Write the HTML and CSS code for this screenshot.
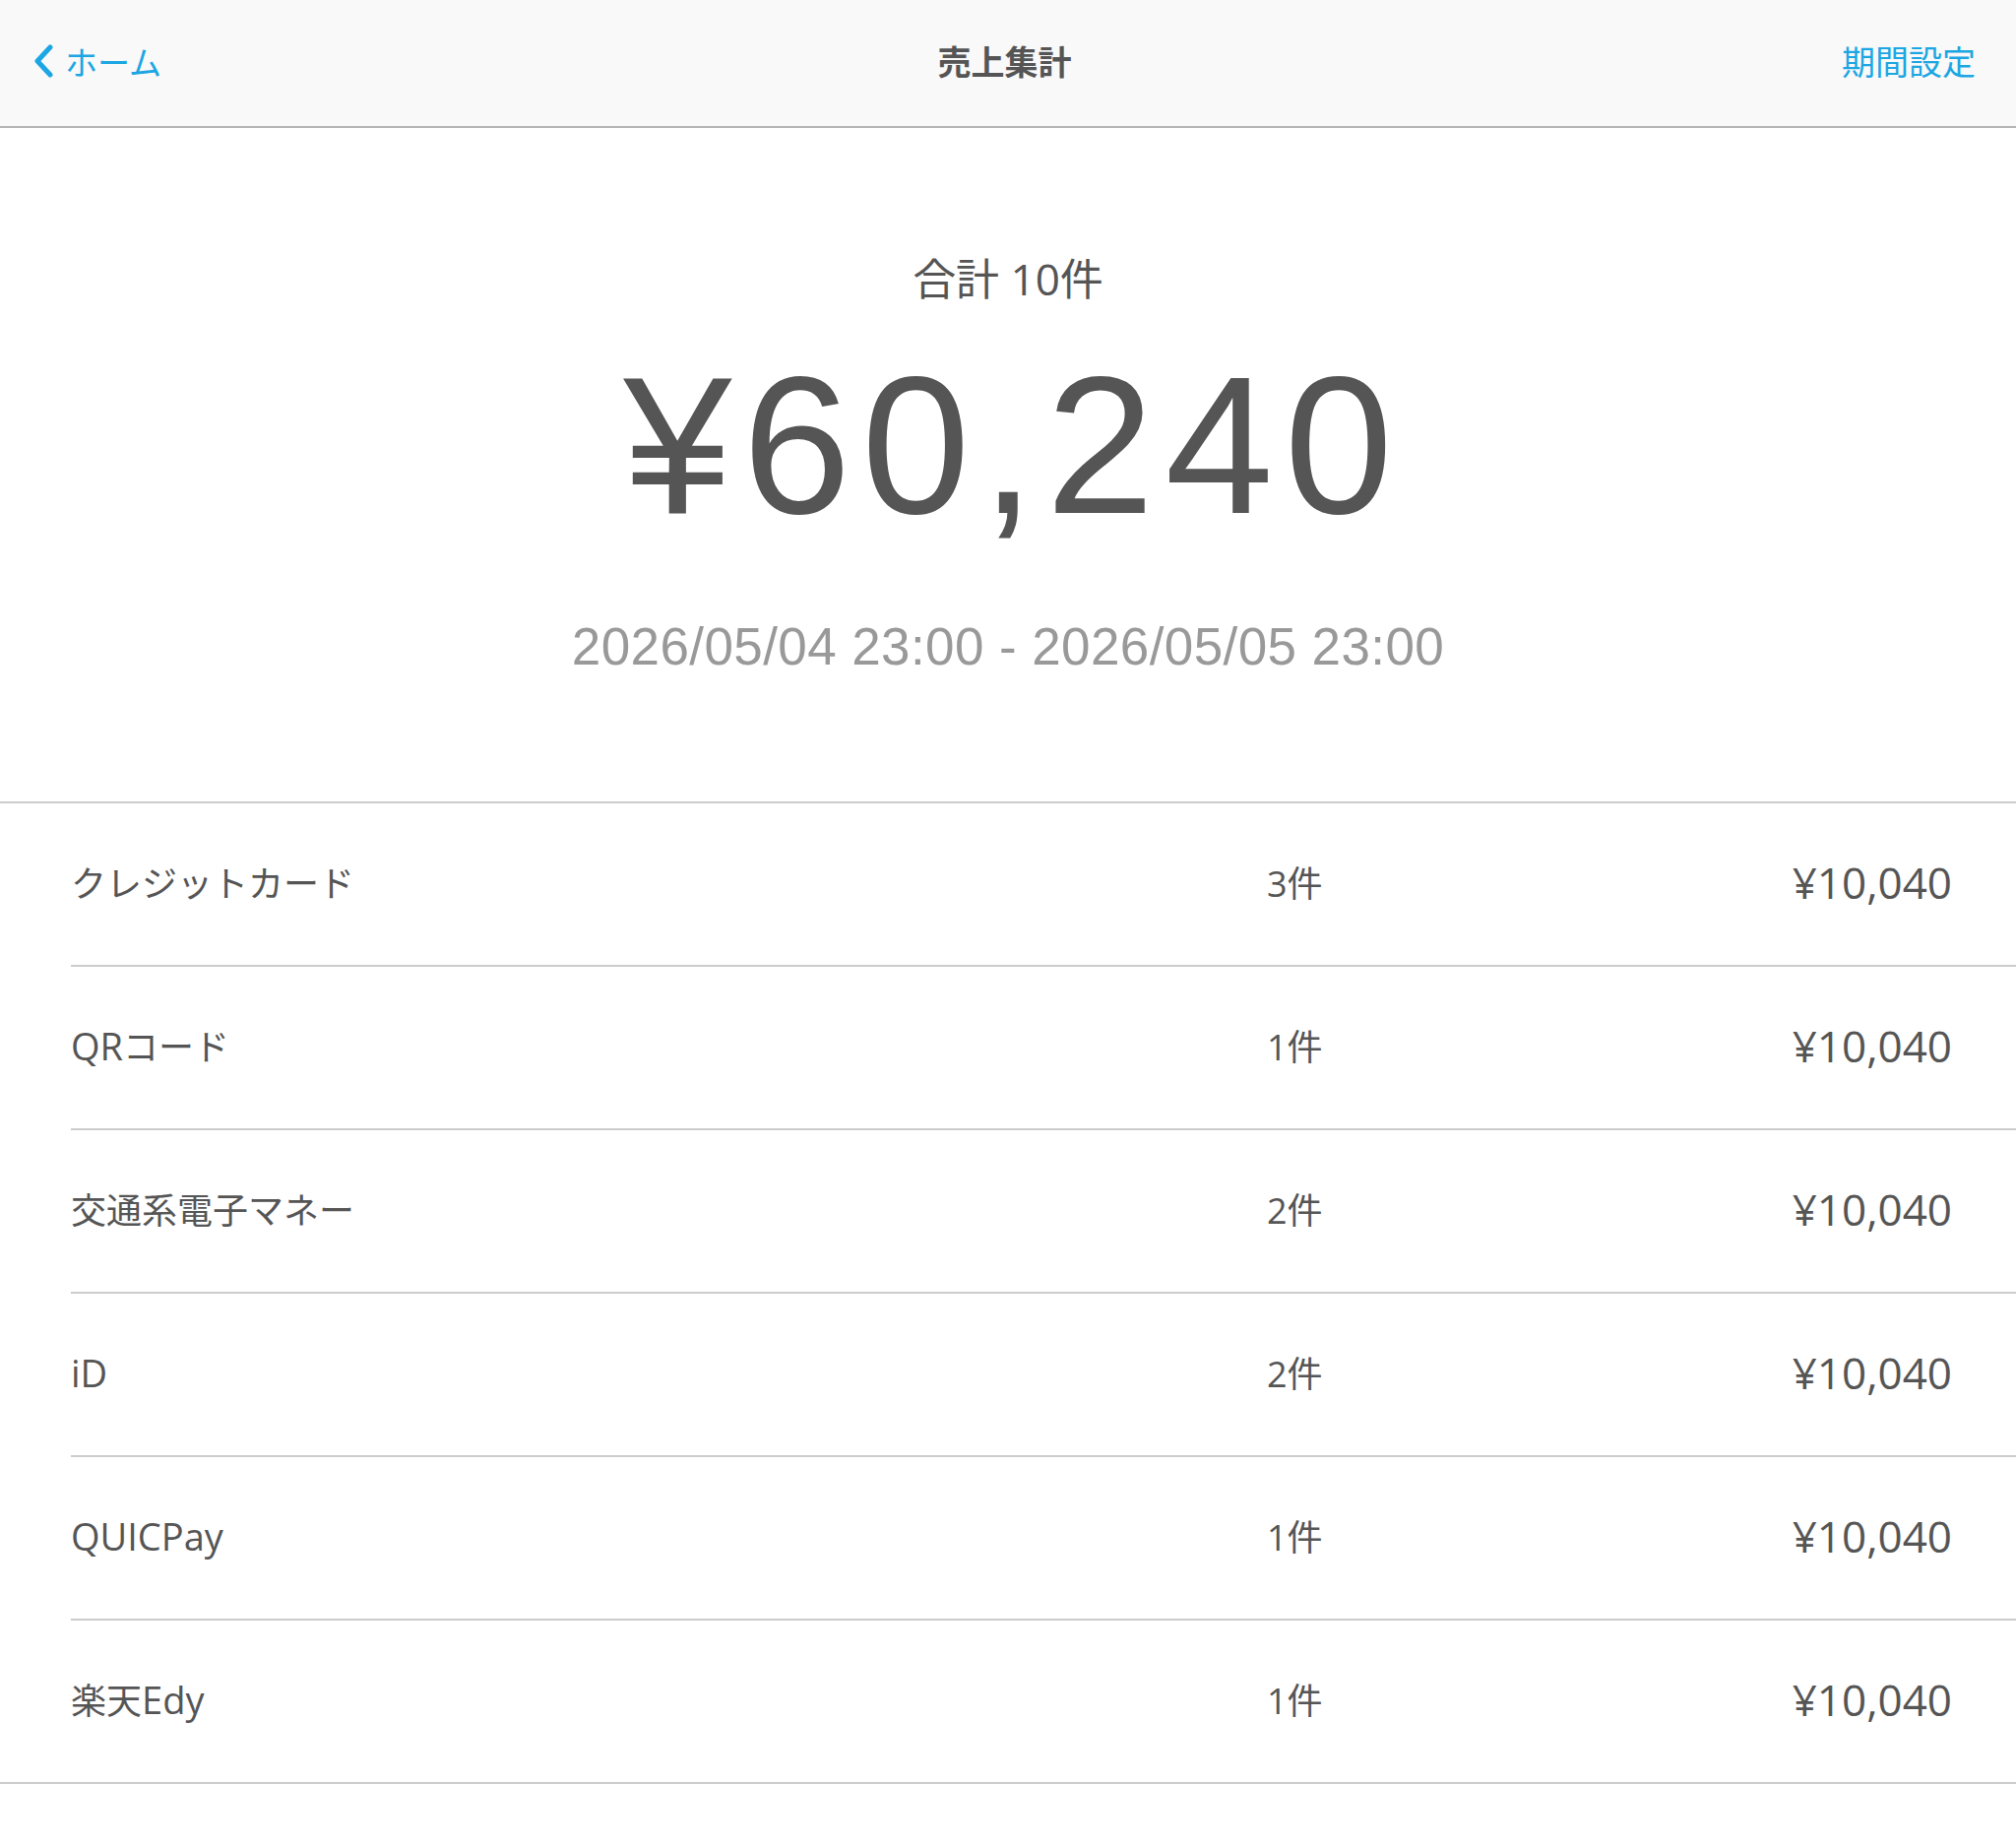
FILE: index.html
```html
<!DOCTYPE html>
<html lang="ja">
<head>
<meta charset="utf-8">
<title>売上集計</title>
<link rel="stylesheet" href="styles.css">
</head>
<body>
<header class="nav">
  <a class="nav-back" href="#">
    <svg class="chevron" width="22" height="34" viewBox="0 0 22 34" aria-hidden="true">
      <polyline points="17,3 4,17 17,31" fill="none" stroke="currentColor" stroke-width="5" stroke-linecap="round" stroke-linejoin="round"/>
    </svg>
    <span>ホーム</span>
  </a>
  <h1 class="nav-title">売上集計</h1>
  <a class="nav-action" href="#">期間設定</a>
</header>

<section class="summary">
  <div class="summary-count">合計 10件</div>
  <div class="summary-total">¥60,240</div>
  <div class="summary-date">2026/05/04 23:00 - 2026/05/05 23:00</div>
</section>

<ul class="list">
  <li class="row"><span class="row-label">クレジットカード</span><span class="row-count">3件</span><span class="row-amount">¥10,040</span></li>
  <li class="row"><span class="row-label"><span class="lat">QR</span>コード</span><span class="row-count">1件</span><span class="row-amount">¥10,040</span></li>
  <li class="row"><span class="row-label">交通系電子マネー</span><span class="row-count">2件</span><span class="row-amount">¥10,040</span></li>
  <li class="row"><span class="row-label"><span class="lat">iD</span></span><span class="row-count">2件</span><span class="row-amount">¥10,040</span></li>
  <li class="row"><span class="row-label"><span class="lat">QUICPay</span></span><span class="row-count">1件</span><span class="row-amount">¥10,040</span></li>
  <li class="row"><span class="row-label">楽天<span class="lat">Edy</span></span><span class="row-count">1件</span><span class="row-amount">¥10,040</span></li>
</ul>
</body>
</html>
```

FILE: styles.css
```css
* { box-sizing: border-box; }

body {
  margin: 0;
  background: #ffffff;
  color: #555555;
  font-family: "Open Sans", "Noto Sans CJK JP", sans-serif;
}

a { text-decoration: none; }

.nav {
  height: 130px;
  background: #f9f9f9;
  border-bottom: 2px solid #b4b4b4;
  display: grid;
  grid-template-columns: 1fr auto 1fr;
  align-items: center;
  padding: 0 41px 5px 34px;
}

.nav-back {
  display: flex;
  align-items: center;
  gap: 10px;
  color: #1ca6e3;
  font-family: "Noto Sans CJK JP", sans-serif;
  font-size: 33px;
  justify-self: start;
}

.chevron { display: block; }

.nav-title {
  margin: 0;
  font-family: "Noto Sans CJK JP", sans-serif;
  font-size: 34px;
  font-weight: 700;
  color: #555555;
}

.nav-action {
  justify-self: end;
  color: #1ca6e3;
  font-family: "Noto Sans CJK JP", sans-serif;
  font-size: 34px;
}

.summary {
  display: flex;
  flex-direction: column;
  align-items: center;
  padding: 123px 0 127px;
}

.summary-count {
  font-size: 44px;
  line-height: 60px;
  color: #555555;
}

.summary-total {
  margin-top: 30px;
  font-family: "Liberation Sans", Arial, sans-serif;
  font-size: 198px;
  line-height: 220px;
  letter-spacing: 11px;
  margin-right: -11px;
  color: #555555;
}

.summary-date {
  margin-top: 64px;
  font-family: "Liberation Sans", Arial, sans-serif;
  font-size: 53px;
  line-height: 60px;
  letter-spacing: 0.4px;
  color: #999999;
}

.list {
  list-style: none;
  margin: 0;
  padding: 0;
  border-top: 2px solid #cccccc;
  border-bottom: 2px solid #cccccc;
}

.row {
  margin-left: 72px;
  padding: 0 65px 5px 0;
  height: 166px;
  border-bottom: 2px solid #cccccc;
  display: grid;
  grid-template-columns: 1215px 1fr auto;
  align-items: center;
}

.row:last-child {
  height: 164px;
  border-bottom: none;
}

.row-label {
  font-size: 36px;
  color: #555555;
}

.lat {
  font-size: 38px;
}

.row-count {
  font-size: 36px;
  color: #555555;
}

.row-amount {
  font-size: 44px;
  color: #555555;
}
```
